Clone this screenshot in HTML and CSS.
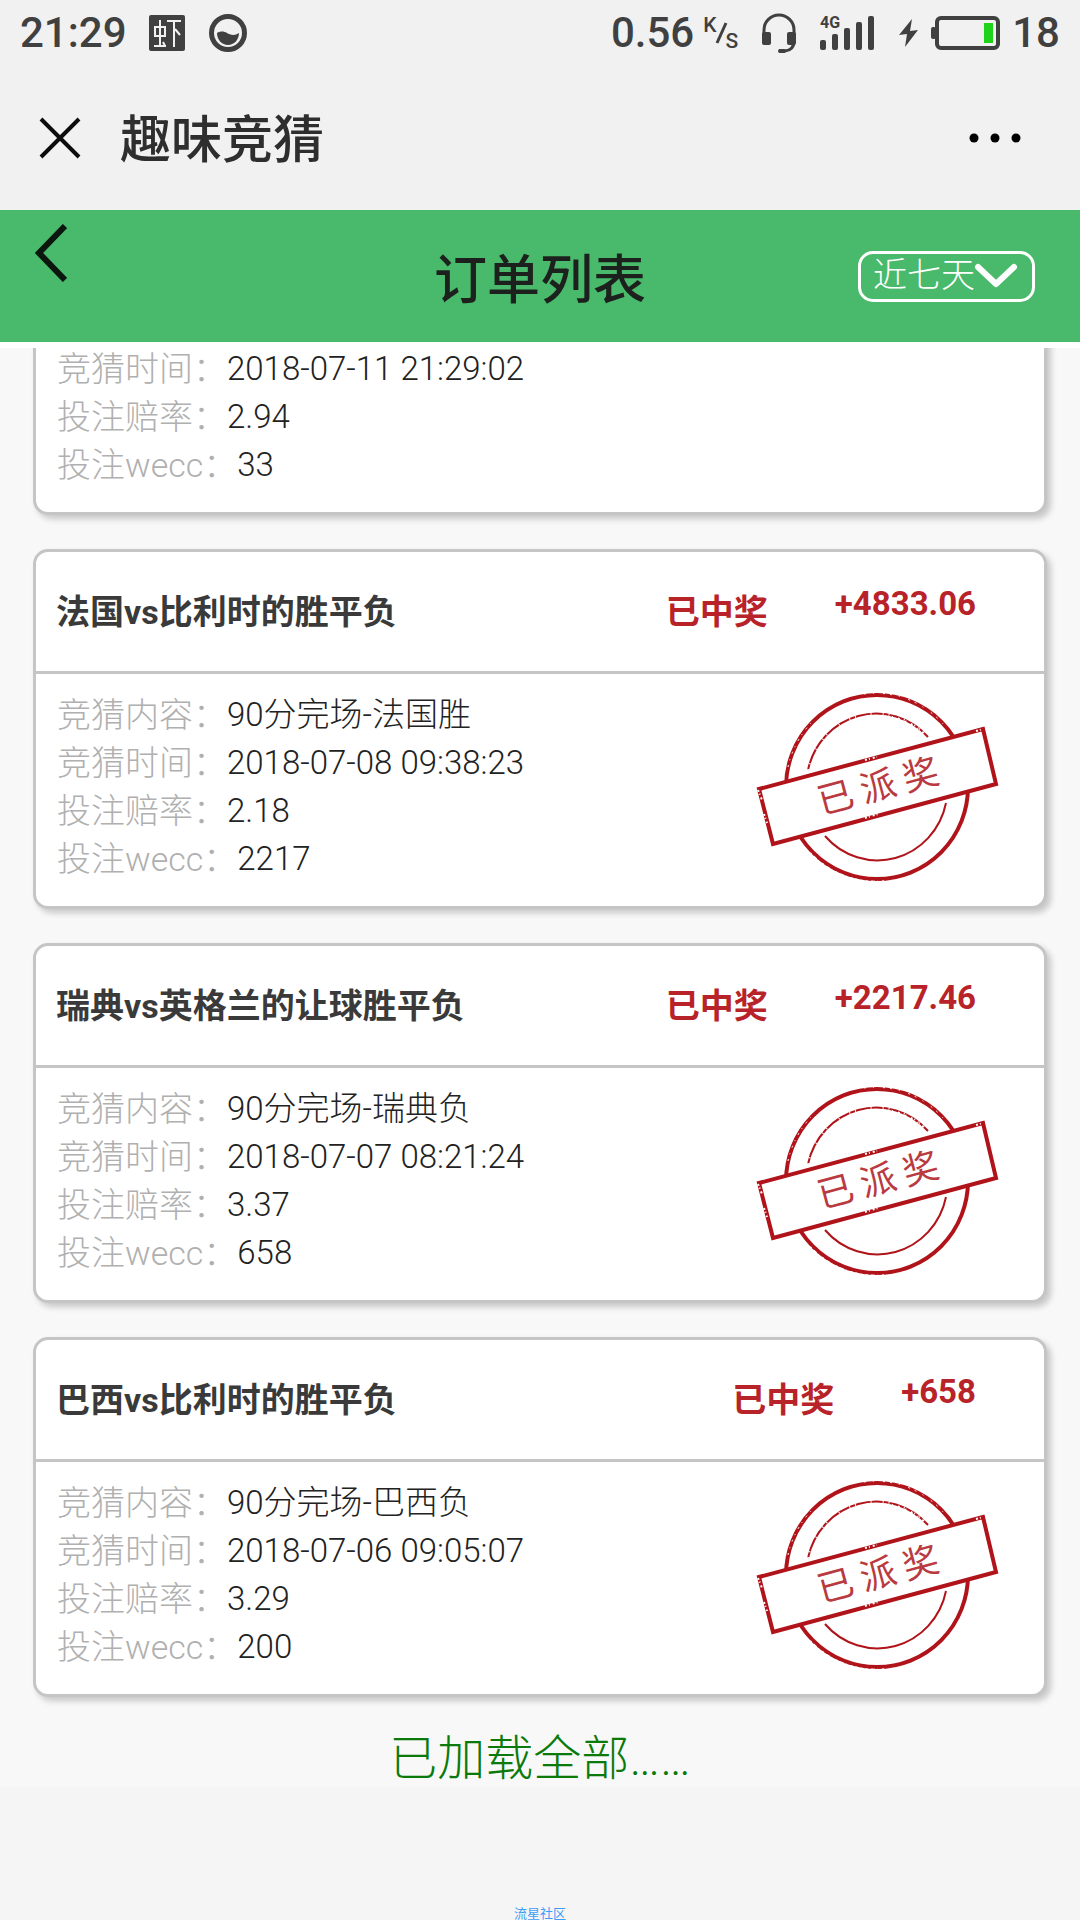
FILE: index.html
```html
<!DOCTYPE html>
<html lang="zh-CN">
<head>
<meta charset="utf-8">
<meta name="viewport" content="width=device-width, initial-scale=1">
<title>趣味竞猜</title>
<link rel="stylesheet" href="styles.css">
</head>
<body>
<svg class="defs" aria-hidden="true">
  <symbol id="stamp" viewBox="0 0 250 200">
    <g fill="none" stroke="#b0141a">
      <ellipse cx="125" cy="100" rx="91" ry="92" stroke-width="4"/>
      <path d="M56 83A70 72 0 0 1 176 50M194 116A70 72 0 0 1 73 149" stroke-width="2"/>
    </g>
    <g fill="none" stroke="#fff">
      <path d="M58 164A91 93 0 0 0 135 192" stroke-width="2" stroke-dasharray="2 3 4 2 1 4" transform="translate(0 2)"/>
      <path d="M112 8A91 93 0 0 1 196 44" stroke-width="1" stroke-dasharray="2 7 1 9 2 5" transform="translate(0 -1)"/>
      <path d="M36 80A91 93 0 0 1 60 35" stroke-width="1" stroke-dasharray="2 5 1 6"/>
      <path d="M56 83A70 72 0 0 1 176 50" stroke-width="2" stroke-dasharray="1 5 1 15 1 11"/>
      <path d="M140 30A70 72 0 0 1 176 50" stroke-width="2" stroke-dasharray="1 5 2 6"/>
    </g>
    <path d="M7 102L231 42L244 97L21 157Z" fill="#fff" stroke="#b0141a" stroke-width="4"/>
    <path d="M113 73l12-3M113 131l13-4M6 103l4 10M224 44l7-2M12 127l3 9" fill="none" stroke="#fff" stroke-width="2" stroke-dasharray="2 2 1 3"/>
    <text class="stamp-text" x="82 126 170" y="112" text-anchor="middle" transform="rotate(-15 126 99)">已派奖</text>
  </symbol>
</svg>

<div class="statusbar">
  <div class="status-group">
    <span>21:29</span>
    <svg class="app-icon" width="36" height="36" viewBox="0 0 36 36" aria-hidden="true">
      <rect width="36" height="36" rx="2" fill="#404040"/>
      <path d="M6 12H16V21H6ZM11 5V31M5 31H17M14 27L16 31M18 6H32M25 6V32M26 14L31 20" fill="none" stroke="#f1f1f1" stroke-width="2"/>
    </svg>
    <svg class="drop-icon" width="38" height="38" viewBox="0 0 38 38" aria-hidden="true">
      <circle cx="19" cy="19" r="16.500" fill="none" stroke="#404040" stroke-width="5"/>
      <path d="M8 19C11 17 15 17 18 19S26 22 30 19C30 26 25 31 19 31S8 26 8 19Z" fill="#404040"/>
    </svg>
  </div>
  <div class="status-group">
    <span>0.56</span>
    <span class="rate"><span class="rate-k">K</span><svg class="rate-slash" width="13" height="22" viewBox="0 0 13 22" aria-hidden="true"><path d="M11 1L2 21" stroke="#404040" stroke-width="3"/></svg><span class="rate-s">S</span></span>
    <svg class="headset" width="36" height="40" viewBox="0 0 36 40" aria-hidden="true">
      <path d="M3 24V17A15 15 0 0 1 33 17V28Q33 37 24 38H18" fill="none" stroke="#404040" stroke-width="3"/>
      <rect x="1" y="19" width="9" height="13" rx="2" fill="#404040"/>
      <rect x="26" y="19" width="9" height="13" rx="2" fill="#404040"/>
      <rect x="17" y="36" width="8" height="4" rx="2" fill="#404040"/>
    </svg>
    <svg class="signal" width="54" height="36" viewBox="0 0 54 36" aria-hidden="true">
      <g fill="#404040"><rect y="25" width="6" height="10" rx="2"/><rect x="12" y="19" width="6" height="16" rx="2"/><rect x="24" y="13" width="6" height="22" rx="2"/><rect x="36" y="7" width="6" height="28" rx="2"/><rect x="48" y="1" width="6" height="34" rx="2"/></g>
      <text class="signal-text" x="0" y="13">4G</text>
    </svg>
    <svg class="bolt" width="20" height="30" viewBox="0 0 20 30" aria-hidden="true"><path d="M13 1L0 17L8 16L6 29L19 12L11 13Z" fill="#404040"/></svg>
    <svg class="battery" width="69" height="34" viewBox="0 0 69 34" aria-hidden="true">
      <rect x="6" y="2" width="61" height="30" rx="4" fill="none" stroke="#404040" stroke-width="4"/>
      <rect y="11" width="5" height="12" rx="2" fill="#404040"/>
      <rect x="53" y="7" width="9" height="20" fill="#1fd31a"/>
    </svg>
    <span>18</span>
  </div>
</div>

<div class="titlebar">
  <button class="icon-button" type="button" aria-label="关闭">
    <svg width="42" height="42" viewBox="0 0 42 42"><path d="M2 2L40 40M40 2L2 40" stroke="#0c0c0c" stroke-width="4"/></svg>
  </button>
  <h1 class="page-title">趣味竞猜</h1>
  <button class="icon-button" type="button" aria-label="更多">
    <svg width="54" height="12" viewBox="0 0 54 12"><g fill="#000"><circle cx="6" cy="6" r="4.500"/><circle cx="27" cy="6" r="4.500"/><circle cx="48" cy="6" r="4.500"/></g></svg>
  </button>
</div>

<header class="toolbar">
  <a class="back" href="#" aria-label="返回">
    <svg width="32" height="58" viewBox="0 0 32 58"><path d="M30 2L4 29L30 56" fill="none" stroke="#0b170e" stroke-width="6"/></svg>
  </a>
  <h2 class="toolbar-title">订单列表</h2>
  <label class="range">
    <select class="range-select" aria-label="时间范围"><option>近七天</option></select>
    <svg class="range-arrow" width="44" height="28" viewBox="0 0 44 28" aria-hidden="true"><path d="M4 5L22 22L40 5" fill="none" stroke="#fff" stroke-width="6" stroke-linecap="round" stroke-linejoin="round"/></svg>
  </label>
</header>

<main class="orders">
  <article class="card card-cut">
    <div class="card-body">
      <dl class="details">
        <div class="row"><dt>竞猜时间：</dt><dd>2018-07-11 21:29:02</dd></div>
        <div class="row"><dt>投注赔率：</dt><dd>2.94</dd></div>
        <div class="row"><dt>投注wecc：</dt><dd>33</dd></div>
      </dl>
    </div>
  </article>

  <article class="card">
    <div class="card-head"><h3 class="match">法国vs比利时的胜平负</h3><span class="result">已中奖</span><span class="amount">+4833.06</span></div>
    <div class="card-body">
      <dl class="details">
        <div class="row"><dt>竞猜内容：</dt><dd>90分完场-法国胜</dd></div>
        <div class="row"><dt>竞猜时间：</dt><dd>2018-07-08 09:38:23</dd></div>
        <div class="row"><dt>投注赔率：</dt><dd>2.18</dd></div>
        <div class="row"><dt>投注wecc：</dt><dd>2217</dd></div>
      </dl>
      <svg class="stamp" role="img" aria-label="已派奖"><use href="#stamp"/></svg>
    </div>
  </article>

  <article class="card">
    <div class="card-head"><h3 class="match">瑞典vs英格兰的让球胜平负</h3><span class="result">已中奖</span><span class="amount">+2217.46</span></div>
    <div class="card-body">
      <dl class="details">
        <div class="row"><dt>竞猜内容：</dt><dd>90分完场-瑞典负</dd></div>
        <div class="row"><dt>竞猜时间：</dt><dd>2018-07-07 08:21:24</dd></div>
        <div class="row"><dt>投注赔率：</dt><dd>3.37</dd></div>
        <div class="row"><dt>投注wecc：</dt><dd>658</dd></div>
      </dl>
      <svg class="stamp" role="img" aria-label="已派奖"><use href="#stamp"/></svg>
    </div>
  </article>

  <article class="card">
    <div class="card-head"><h3 class="match">巴西vs比利时的胜平负</h3><span class="result">已中奖</span><span class="amount">+658</span></div>
    <div class="card-body">
      <dl class="details">
        <div class="row"><dt>竞猜内容：</dt><dd>90分完场-巴西负</dd></div>
        <div class="row"><dt>竞猜时间：</dt><dd>2018-07-06 09:05:07</dd></div>
        <div class="row"><dt>投注赔率：</dt><dd>3.29</dd></div>
        <div class="row"><dt>投注wecc：</dt><dd>200</dd></div>
      </dl>
      <svg class="stamp" role="img" aria-label="已派奖"><use href="#stamp"/></svg>
    </div>
  </article>

  <p class="loaded">已加载全部……</p>
</main>

<footer class="community">流星社区</footer>
</body>
</html>
```
FILE: styles.css
```css
* {
  box-sizing: border-box;
}

body {
  display: flex;
  flex-direction: column;
  min-height: 100vh;
  margin: 0;
  background: #f5f5f5;
  color: #222;
  font-family: Roboto, "Noto Sans CJK SC", sans-serif;
  font-size: 33px;
  font-weight: 300;
  line-height: 48px;
}

h1, h2, h3, p, dl, dd {
  margin: 0;
}

svg {
  display: block;
  flex: none;
}

button, select {
  font: inherit;
}

.defs {
  display: none;
}

/* Phone status bar */
.statusbar {
  display: flex;
  justify-content: space-between;
  height: 66px;
  padding: 0 20px;
  background: #f1f1f1;
  color: #404040;
  font-size: 42px;
  font-weight: 500;
}

.status-group {
  display: flex;
  align-items: center;
}

.app-icon {
  margin-left: 22px;
}

.drop-icon {
  margin-left: 24px;
}

.rate {
  display: flex;
  align-items: center;
  height: 34px;
  margin-left: 9px;
  font-size: 21px;
  line-height: 18px;
}

.rate-k {
  align-self: flex-start;
}

.rate-slash {
  margin: 0 -2px;
}

.rate-s {
  align-self: flex-end;
}

.headset {
  margin-left: 23px;
}

.signal {
  margin-left: 23px;
  overflow: visible;
}

.signal-text {
  fill: #404040;
  font-size: 16px;
  font-weight: 700;
}

.bolt {
  margin-left: 25px;
}

.battery {
  margin: 0 12px;
}

/* Browser title bar */
.titlebar {
  display: flex;
  align-items: center;
  height: 144px;
  padding: 0 58px 0 39px;
  background: #f1f1f1;
}

.icon-button {
  padding: 0;
  border: 0;
  background: none;
}

.page-title {
  flex: 1;
  margin-left: 39px;
  padding-top: 6px;
  color: #2e2e2e;
  font-size: 51px;
  font-weight: 500;
  line-height: 72px;
}

/* Green toolbar */
.toolbar {
  display: grid;
  grid-template-columns: 1fr auto 1fr;
  align-items: center;
  height: 138px;
  padding: 0 35px;
  border-bottom: 6px solid #fff;
  background: #49ba6b;
}

.back {
  align-self: start;
  justify-self: start;
  padding-top: 14px;
}

.toolbar-title {
  padding-top: 10px;
  color: #1d211d;
  font-size: 53px;
  font-weight: 500;
  line-height: 72px;
}

.range {
  display: grid;
  align-items: center;
  justify-self: end;
  width: 177px;
  margin-right: 10px;
}

.range-select {
  grid-area: 1 / 1;
  height: 51px;
  padding: 0 0 3px 12px;
  border: 3px solid #fff;
  border-radius: 15px;
  appearance: none;
  background: none;
  color: #fff;
  font-size: 34px;
  line-height: 42px;
}

.range-arrow {
  grid-area: 1 / 1;
  justify-self: end;
  margin-right: 17px;
  pointer-events: none;
}

/* Order list */
.orders {
  display: flex;
  flex-direction: column;
  gap: 34px;
  padding: 0 33px;
  overflow: hidden;
  background: #f8f8f8;
}

.card {
  border: 3px solid #c5c5c5;
  border-radius: 15px;
  background: #fff;
  box-shadow: 4px 4px 6px rgba(0, 0, 0, 0.2);
}

.card-cut {
  margin-top: -23px;
}

.card-head {
  display: flex;
  align-items: center;
  height: 119px;
  padding: 0 68px 0 20px;
  border-bottom: 3px solid #c5c5c5;
  box-sizing: content-box;
  font-weight: 700;
}

.match {
  flex: 1;
  color: #3a3a3a;
  font-size: 34px;
  font-weight: 700;
}

.result {
  color: #b8232a;
  font-size: 34px;
}

.amount {
  margin-left: 67px;
  padding-bottom: 16px;
  color: #b8232a;
}

.card-body {
  display: flex;
  justify-content: space-between;
  align-items: flex-start;
  padding: 17px 42px 23px 21px;
}

.row {
  display: flex;
}

.row dt {
  color: #b0b0b0;
  font-size: 34px;
}

.stamp {
  width: 250px;
  height: 200px;
  margin: -4px 0;
}

.stamp-text {
  fill: #b93a40;
  font-size: 36px;
  font-weight: 400;
}

.loaded {
  color: #0b7a0b;
  font-size: 48px;
  line-height: 56px;
  text-align: center;
}

.community {
  margin-top: auto;
  color: #3f9df5;
  font-size: 13px;
  font-weight: 400;
  line-height: 13px;
  text-align: center;
}
```
